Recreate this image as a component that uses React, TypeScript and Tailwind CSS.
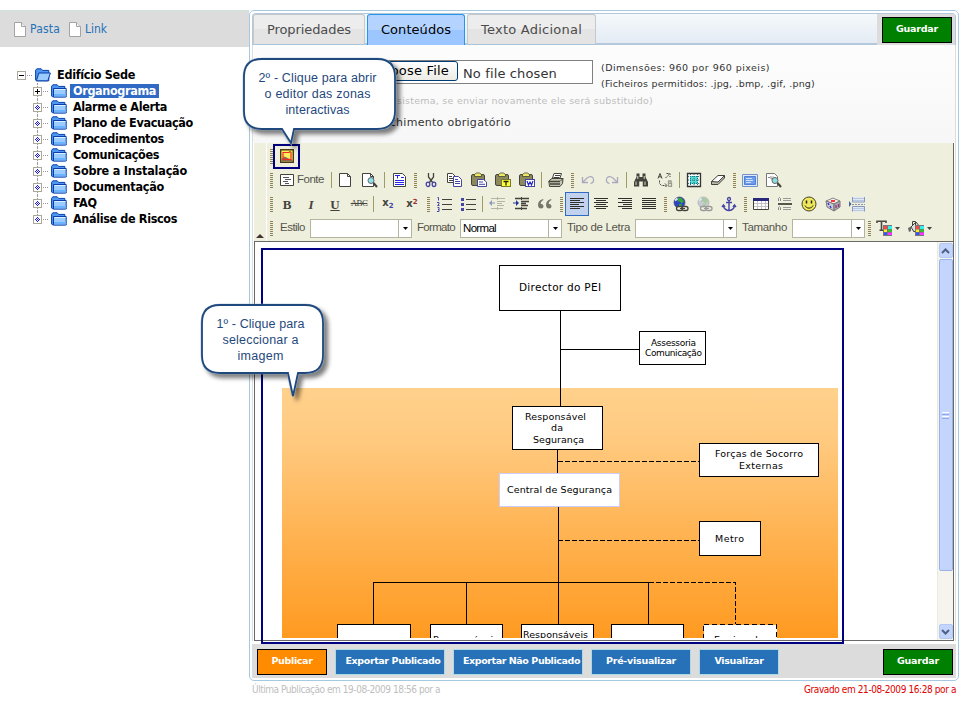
import { useLayoutEffect, useRef, type ReactNode } from "react";

/** One line of text whose tracking is computed so that it spans `w` pixels. */
function Fit({ w, className = "", children }: { w: number; className?: string; children: string }) {
  const ref = useRef<HTMLSpanElement>(null);
  useLayoutEffect(() => {
    const el = ref.current;
    if (!el) return;
    el.style.letterSpacing = "0px";
    const natural = el.getBoundingClientRect().width;
    el.style.letterSpacing = `${(w - natural) / children.length}px`;
  }, [w, children]);
  return (
    <span ref={ref} className={`inline-block shrink-0 self-center whitespace-nowrap ${className}`}>
      {children}
    </span>
  );
}

const verdana = "font-['DejaVu_Sans',sans-serif]";
const tahoma = "font-['DejaVu_Sans_Condensed','DejaVu_Sans',sans-serif]";

function Icon({ children, w = 16, h = 16 }: { children: ReactNode; w?: number; h?: number }) {
  return (
    <svg width={w} height={h} viewBox={`0 0 ${w} ${h}`} fill="none" className="block shrink-0">
      {children}
    </svg>
  );
}

/* ---------- Tree ---------- */

function SheetIcon() {
  return (
    <Icon w={12} h={15}>
      <path d="M.5.5h7l4 4v10H.5z" fill="#fff" stroke="#a3a3a3" />
      <path d="M7.5.5v4h4" fill="#eee" stroke="#a3a3a3" />
    </Icon>
  );
}

function FolderIcon({ open = false }: { open?: boolean }) {
  return (
    <Icon w={16} h={14}>
      <path d="M.6 12V2.2L1.8.8H6.2L7.5 2.4H13.8V12.8H1.4z" fill="#4e97f2" stroke="#0b3fa8" />
      {open ? (
        <path d="M3.8 5H15.4L12.8 12.8H1.4z" fill="#9accff" stroke="#0b3fa8" />
      ) : (
        <>
          <path d="M2.5 4.5H15.2V13H2.5z" fill="#9accff" stroke="#0b3fa8" />
          <path d="M3.5 5.500H14.500" stroke="#d9edff" />
          <path d="M3 10h12v2.500H3z" fill="#6db0fb" />
        </>
      )}
    </Icon>
  );
}

function Toggle({ kind }: { kind: "minus" | "plus" | "dot" }) {
  return (
    <span className="grid h-[9px] w-[9px] shrink-0 place-items-center border border-[#aca899] bg-white">
      <svg width="7" height="7" viewBox="0 0 7 7" shapeRendering="crispEdges">
        {kind === "dot" ? (
          <path d="M3 1h1v1H3zM2 2h1v1H2zM4 2h1v1H4zM1 3h1v1H1zM3 3h1v1H3zM5 3h1v1H5zM2 4h1v1H2zM4 4h1v1H4zM3 5h1v1H3z" fill="#1b1be0" />
        ) : (
          <path d={kind === "plus" ? "M1 3h5v1H1zM3 1h1v5H3z" : "M1 3h5v1H1z"} fill="#000" />
        )}
      </svg>
    </span>
  );
}

const nodes: { label: string; w: number; kind: "plus" | "dot"; selected?: boolean }[] = [
  { label: "Organograma", w: 83, kind: "plus", selected: true },
  { label: "Alarme e Alerta", w: 94, kind: "dot" },
  { label: "Plano de Evacuação", w: 120, kind: "dot" },
  { label: "Procedimentos", w: 91, kind: "dot" },
  { label: "Comunicações", w: 86, kind: "dot" },
  { label: "Sobre a Instalação", w: 114, kind: "dot" },
  { label: "Documentação", w: 91, kind: "dot" },
  { label: "FAQ", w: 24, kind: "dot" },
  { label: "Análise de Riscos", w: 104, kind: "dot" },
];

function Sidebar() {
  return (
    <aside className="w-[249px] shrink-0 pt-[10px]">
      <div className="flex h-[37px] items-center gap-[4px] border-t border-[#cfe3da] bg-[#dcdcdc] pl-[14px] text-[12px] text-[#2671b8]">
        <SheetIcon />
        <Fit w={30} className={tahoma}>Pasta</Fit>
        <span className="w-[1px]" />
        <SheetIcon />
        <Fit w={22} className={tahoma}>Link</Fit>
      </div>
      <div className={`mt-[20px] text-[12.5px] leading-[16px] font-bold text-black ${tahoma}`}>
        <div className="flex h-4 items-center pl-[17px]">
          <Toggle kind="minus" />
          <span className="mr-[3px] ml-px w-[5px] border-t border-dotted border-[#999]" />
          <FolderIcon open />
          <Fit w={78} className="ml-[6px]">Edifício Sede</Fit>
        </div>
        {nodes.map((n, i) => (
          <div key={n.label} className="flex h-4 items-center pl-[33px]">
            <span className="flex h-4 w-[9px] shrink-0 flex-col items-center">
              <span className="h-[4px] border-l border-dotted border-[#999]" />
              <Toggle kind={n.kind} />
              <span className={`h-[3px] border-l border-dotted ${i === nodes.length - 1 ? "border-transparent" : "border-[#999]"}`} />
            </span>
            <span className="mr-[3px] ml-px w-[5px] border-t border-dotted border-[#999]" />
            <FolderIcon />
            <span className={`ml-[3px] h-[14px] px-[3px] leading-[14px] ${n.selected ? "bg-[#316ac5] text-white" : ""}`}>
              <Fit w={n.w}>{n.label}</Fit>
            </span>
          </div>
        ))}
      </div>
    </aside>
  );
}

/* ---------- Toolbar ---------- */

function Grip() {
  return (
    <span className="flex w-2 shrink-0 justify-center">
      <svg width="3" height="15" shapeRendering="crispEdges">
        {[0, 2, 4, 6, 8, 10, 12, 14].map((y) => (
          <path key={y} d={`M0 ${y}h3v1H0z`} fill="#8f8255" />
        ))}
      </svg>
    </span>
  );
}
function Sep() {
  return (
    <span className="flex w-[5px] shrink-0 justify-center">
      <span className="h-4 w-px bg-[#a09b62]" />
    </span>
  );
}
function Btn({ children, on = false }: { children: ReactNode; on?: boolean }) {
  return (
    <span className={`flex h-6 w-6 shrink-0 items-center justify-center ${on ? "border border-[#316ac5] bg-[#c1d2ee]" : ""}`}>
      {children}
    </span>
  );
}
function Row({ children }: { children: ReactNode }) {
  return <div className="flex h-6 items-center">{children}</div>;
}

const D = "#43433c";
const B = "#4545a5";

const PageI = () => (
  <Icon><path d="M1.5 1.5h8l3 3v10h-11z" fill="#fff" stroke={D} /><path d="M9.5 1.5v3h3" stroke={D} /></Icon>
);
const PreviewI = () => (
  <Icon>
    <path d="M.5 1.5h8l3 3v10h-11z" fill="#fff" stroke={D} />
    <path d="M8.5 1.5v3h3" stroke={D} />
    <circle cx="9" cy="8.5" r="3" fill="#8fe3e3" stroke="#667" />
    <path d="M11.500 11l3.500 4" stroke={D} strokeWidth="2" />
  </Icon>
);
const TemplateI = () => (
  <Icon>
    <path d="M2.5 1.5h9l3 3v10h-12z" fill="#fff" stroke={D} />
    <path d="M4 3.5h5M6.500 3.500v3M10 5.500h3M4 8.500h9M4 10.500h9M4 12.500h9" stroke="#2424e8" />
  </Icon>
);
const CutI = () => (
  <Icon>
    <path d="M5.500 1v4l4.500 6M10.500 1v4L6 11" stroke={D} strokeWidth="1.300" />
    <ellipse cx="5" cy="12.300" rx="1.800" ry="2.200" stroke={B} strokeWidth="1.300" /><ellipse cx="11" cy="12.300" rx="1.800" ry="2.200" stroke={B} strokeWidth="1.300" />
  </Icon>
);
const CopyI = () => (
  <Icon>
    <path d="M.5 1.500h5l3 3v6h-8z" fill="#fff" stroke={D} /><path d="M2 4.500h3M2 6.500h4M2 8.500h4" stroke={D} />
    <path d="M6.500 4.500h5l3 3v7h-8z" fill="#fff" stroke={B} /><path d="M8 7.500h3M8 9.500h5M8 11.500h5" stroke={B} />
  </Icon>
);
function PasteI({ tag }: { tag?: "T" | "W" }) {
  return (
    <Icon>
      <rect x=".5" y="2.500" width="13" height="11" rx="1.500" fill="#8c8a5b" stroke={D} />
      <path d="M3.500 4.500V2.500L5.500 1h3l2 1.500v2z" fill="#efea63" stroke={D} strokeWidth=".8" />
      {tag ? (
        <>
          <rect x="6.500" y="7.500" width="9" height="7" fill={tag === "T" ? "#ffff38" : "#fff"} stroke={tag === "T" ? "#77762d" : B} />
          {tag === "T" ? <path d="M8.500 9.500h5M11 9.500v4" stroke="#222" strokeWidth="1.300" /> : <path d="M8 9l1.500 4L11 10l1.500 3L14 9" stroke="#2828c8" strokeWidth="1.200" />}
        </>
      ) : (
        <><path d="M6.500 7.500h6l3 2.500v4.500h-9z" fill="#fff" stroke={B} /><path d="M8 10h4M8 12.300h6" stroke={B} /></>
      )}
    </Icon>
  );
}
const PrintI = () => (
  <Icon>
    <path d="M4.500 6l1.500-4.500h7.500L12 6z" fill="#fff" stroke={D} /><path d="M7 3.500h5M6 5.500h5" stroke={D} />
    <path d="M.8 9l3-2.500H15l-.500 5L12 14.500H1.500z" fill="#c8c6b4" stroke={D} /><path d="M1 9.500h11M2 12h10" stroke={D} strokeWidth="1.400" /><path d="M12.500 9L15 6.500" stroke={D} />
  </Icon>
);
const UndoI = ({ flip = false }: { flip?: boolean }) => (
  <Icon><g transform={flip ? "matrix(-1 0 0 1 16 0)" : undefined}><path d="M2.500 5v5.500H8" stroke="#a9a9bd" strokeWidth="1.300" /><path d="M3 10L7 6c3-2.500 6-1.500 6.500 1s-1 4-3 4.500" stroke="#a9a9bd" strokeWidth="1.200" /></g></Icon>
);
const FindI = () => (
  <Icon><path d="M3.500 1.500h3v3.500h3V1.500h3V5l2.500 5v4.500H9.800V9.500H6.200v5H1V10l2.500-5z" fill={D} /><path d="M3 9.500v3.500M12 9.500v3.500M4.800 4v3M11.200 4v3" stroke="#d6d5c4" /></Icon>
);
const ReplaceI = () => (
  <Icon>
    <path d="M1 6.500L3 1.500l2 5M1.700 4.800h2.600" stroke={D} /><path d="M11.500 8.500v6M11.500 9h2.500v2.300h-2.500h3v3h-3" stroke="#9a9a8d" strokeWidth="1.300" />
    <path d="M8.500 6L12 2.500M9.500 1.500h3.500v3.500M2.500 8.500v3l2.500 2.500M5.500 13.500h4M8 11.500l2 2-2 2" stroke={D} strokeDasharray="2 1" />
  </Icon>
);
const SelectAllI = () => (
  <Icon><path d="M1.500 1.500h13v13h-13z" fill="#fff" stroke="#333" strokeWidth="1.300" /><path d="M4 4h8v8H4z" fill="#54dada" /><path d="M4.500 2v12M11.500 2v12M2 4.500h12M2 11.500h12M8 2v12M2 8h12" stroke="#277" strokeDasharray="1 1" /></Icon>
);
const EraserI = () => (
  <Icon><path d="M1.500 9.500L8 3.500h6.500l-6 7H1.500z" fill="#fff" stroke={D} /><path d="M1.500 9.500V12.500H8l6.500-6.500V3.500L8 10z" fill="#bbb9ae" stroke={D} /></Icon>
);
const FitWindowI = () => (
  <Icon><path d="M.5 2.500h15v12H.5z" fill="#dfe9fb" stroke="#7494c8" /><path d="M2.500 4.500h11v8h-11z" fill="#6f9ce6" stroke="#4f7fd6" /><path d="M4 6.500h6M4 8.500h7M4 10.500h5" stroke="#cfe0ff" /></Icon>
);
const SpellI = () => (
  <Icon><path d="M.5 1.500h8l3 3v10H.5z" fill="#fff" stroke="#777" /><path d="M2 5.500h2M5 4v3h2V4.500" stroke="#888" /><circle cx="9" cy="8.500" r="3" fill="#8fdede" stroke="#666" /><path d="M11.500 11l3.500 4" stroke={D} strokeWidth="2" /></Icon>
);
function Lines({ rows, x = 1 }: { rows: [number, number][]; x?: number }) {
  return (
    <Icon>
      <g shapeRendering="crispEdges">
        {rows.map(([dx, w], i) => <path key={i} d={`M${x + dx} ${2 + i * 2}h${w}v1h-${w}z`} fill="#2f2f2b" />)}
      </g>
    </Icon>
  );
}
const ListI = ({ ordered = false }: { ordered?: boolean }) => (
  <Icon>
    <path d="M6 3.500h10M6 8.500h10M6 13.500h10" stroke={D} />
    {ordered ? (
      <path d="M1.500 1.500h1v3M1 6.500h2v1.500L1.500 9.500h2M1.500 11.500h1.500v4h-2M2 13.500h1" stroke={B} />
    ) : (
      <path d="M1 2h3v3H1zM1 7h3v3H1zM1 12h3v3H1z" fill={B} />
    )}
  </Icon>
);
const IndentI = ({ faded = false }: { faded?: boolean }) => (
  <Icon>
    <path d="M2 2.500h14M8 5.500h8M8 7.500h5M8 9.500h7M2 12.500h12" stroke={faded ? "#b5b4a5" : D} strokeWidth={faded ? 1 : 1.400} />
    <path d="M8.500 1v14" stroke={faded ? "#b5b4a5" : D} strokeDasharray="1 1" />
    {faded ? <path d="M3 4L0 7l3 3zM3 6.500h3v1H3z" fill="#8f9ab8" /> : <path d="M3 4l3 3-3 3zM0 6.500h3v1H0z" fill="#22389a" />}
  </Icon>
);
const QuoteI = () => (
  <Icon><path d="M6 3C2.500 4 1 6 1 9c0 4.500 5.500 4.500 5.500 1.300C6.500 8.500 5.300 7.600 3.700 8 3.700 6 4.500 5 6.500 4zM14 3c-3.500 1-5 3-5 6 0 4.500 5.500 4.500 5.500 1.300 0-1.800-1.200-2.700-2.800-2.300 0-2 .8-3 2.800-4z" fill="#77766c" /></Icon>
);
const GlobeI = ({ faded = false }: { faded?: boolean }) => (
  <Icon>
    <circle cx="6.500" cy="6.500" r="5.500" fill={faded ? "#c7cad0" : "#2b45c5"} stroke={faded ? "#aaa" : "#445"} strokeWidth=".7" />
    <path d="M5 1.500l4 1 2 3-2.500 2-2-2-2 0zM6 8l3 0-1 3-2-1z" fill={faded ? "#a5cc9c" : "#38a53a"} /><path d="M2 4.500l2.500-2" stroke="#dce7ff" strokeWidth="2" />
    <rect x="3.500" y="10.500" width="6" height="4" rx="2" fill="#efefde" stroke={faded ? "#999" : D} strokeWidth="1.300" /><rect x="9" y="10.500" width="6" height="4" rx="2" fill="#efefde" stroke={faded ? "#999" : D} strokeWidth="1.300" /><path d="M7 12.500h5" stroke={faded ? "#999" : D} />
  </Icon>
);
const AnchorI = () => (
  <Icon><circle cx="8" cy="3" r="1.500" stroke={B} strokeWidth="1.300" /><path d="M8 4.500v10M5 6.500h6M2.500 9.500c0 3 3 5 5.500 5s5.500-2 5.500-5M1 11l1.500-2L4 11M12 11l1.500-2L15 11" stroke={B} strokeWidth="1.400" /></Icon>
);
const TableI = () => (
  <Icon><path d="M.5 2.500h15v11H.5z" fill="#fff" stroke={D} /><path d="M0 2h16v3H0z" fill="#27277c" /><path d="M4.500 5v8M8.500 5v8M12.500 5v8M1 7.500h14M1 10.500h14" stroke="#c4c4c4" /></Icon>
);
const RuleI = () => (
  <Icon><path d="M1 8h14" stroke={D} strokeWidth="1.800" /><path d="M1.500 5V2.500l1-1 1 1V5M1.500 14v-2.500l1-1 1 1V14" stroke="#888" /><path d="M6 2.500h8M6 4.500h8M6 11.500h8M6 13.500h8" stroke="#999" /></Icon>
);
const SmileI = () => (
  <Icon><circle cx="8" cy="8" r="7" fill="#eee85a" stroke="#44432f" /><path d="M5.500 4.500v3M10.500 4.500v3" stroke="#222" strokeWidth="1.500" /><path d="M4 9.500c1.500 3.500 6.500 3.500 8 0" stroke="#222" /></Icon>
);
const DiceI = () => (
  <Icon><path d="M1 5l7-3 7 3-6 3z" fill="#eee" stroke="#888" /><path d="M1 5l8 3v7l-7-4z" fill="#ccc" stroke="#777" /><path d="M9 8l6-3v6l-6 4z" fill="#aaa" stroke="#777" /><path d="M6 4h4v2H6z" fill="#f33" /><path d="M3 7l1 2M5 10l1 2" stroke="#33d" strokeWidth="1.500" /><path d="M11 9v3M13.500 8v3" stroke="#938" strokeWidth="1.300" /></Icon>
);
const BreakI = () => (
  <Icon><path d="M3.500 1v5h12V1M3.500 15.500v-5h12v5" fill="#dfe8f5" stroke="#8699bd" /><path d="M4 2.500h11M4 4.500h11M4 12.500h11M4 14.500h11" stroke="#b8c8e2" /><path d="M3 8.500h13" stroke="#8a95a8" strokeDasharray="2 1" /><path d="M0 5l2.500 3L0 11z" fill="#46649c" /></Icon>
);
const ImageMapI = () => (
  <Icon w={14} h={14}><path d="M.7.7h12.600v12.600H.7z" fill="#ffef5a" stroke="#4c3a1c" strokeWidth="1.400" /><path d="M1.500 10l3-2.500 3 1.500 5 2v1.500h-11z" fill="#8b6b4f" /><path d="M3 3.500h8v7H3z" stroke="#f02a2a" strokeWidth="1.200" /><circle cx="10" cy="2.800" r="1.200" fill="#b0801c" /></Icon>
);
function ColorI({ kind }: { kind: "text" | "fill" }) {
  return (
    <span className="flex items-center gap-[3px]">
      <Icon>
        {kind === "text" ? (
          <path d="M1 3V1.200h9V3M5.500 1v9M3.500 10.300h4" stroke="#4b4b44" strokeWidth="1.600" />
        ) : (
          <><path d="M3 7l5-5 4 5-6 5z" fill="#ddd" stroke={D} /><path d="M4.500 5.500V1.500h3V5" stroke={D} /><path d="M3 6.500L0 8l1 4 2-1z" fill="#666" /></>
        )}
        <path d="M7 5h9v11H7z" fill="#777" /><path d="M8 6h3v3H8z" fill="#f44" /><path d="M12 6h4v3h-4z" fill="#3ee" /><path d="M8 9.500h3v2.500H8z" fill="#fe2" /><path d="M12 9.500h4V12h-4z" fill="#3b3" /><path d="M8 12.500h3V15H8z" fill="#35f" /><path d="M12 12.500h4V15h-4z" fill="#f3f" />
      </Icon>
      <svg width="5" height="3"><path d="M0 0h5L2.500 3z" fill={D} /></svg>
    </span>
  );
}
const G = ({ children, className }: { children: ReactNode; className: string }) => (
  <span className={`font-['Liberation_Serif',serif] text-[13px] leading-none font-bold text-[#43433c] ${className}`}>{children}</span>
);

function Combo({ label, lw, className, value = "" }: { label: string; lw: number; className: string; value?: string }) {
  return (
    <>
      <Fit w={lw} className="ml-[5px] text-[11.5px] text-[#55554c]">{label}</Fit>
      <span className={`ml-[5px] flex h-[19px] shrink-0 border border-[#b5b49e] bg-white text-[11.5px] leading-[17px] text-black ${className}`}>
        <span className="flex-1 pl-[2px]">{value ? <Fit w={33}>{value}</Fit> : null}</span>
        <span className="grid w-[13px] place-items-center border-l border-[#b5b49e]">
          <svg width="5" height="3"><path d="M0 0h5L2.500 3z" fill="#000" /></svg>
        </span>
      </span>
    </>
  );
}

function Toolbar() {
  return (
    <div className="flex h-[98px] border-r border-[#696969] bg-[#efefde] font-['Liberation_Sans',sans-serif]">
      <div className="flex w-[13px] items-end justify-center border-r border-white pb-[3px]">
        <svg width="8" height="4"><path d="M0 4h8L4 0z" fill="#433" /></svg>
      </div>
      <div className="pt-px">
        <Row>
          <Grip />
          <span className="-ml-[2px] flex h-[25px] w-[27px] shrink-0 items-center justify-center border-2 border-[#000080]"><ImageMapI /></span>
        </Row>
        <Row>
          <Grip />
          <span className="flex w-[54px] items-center gap-[3px] pl-[5px] text-[11.5px] text-[#55554c]">
            <Icon w={14} h={12}><path d="M.5.500h13v11H.5z" fill="#fff" stroke={D} /><path d="M3 3.500h6M5 5.500h6M3 7.500h5M5 9.500h4" stroke="#555" /></Icon>
            <Fit w={27}>Fonte</Fit>
          </span>
          <Sep /><Btn><PageI /></Btn><Btn><PreviewI /></Btn>
          <Sep /><Btn><TemplateI /></Btn>
          <Grip /><Btn><CutI /></Btn><Btn><CopyI /></Btn><Btn><PasteI /></Btn><Btn><PasteI tag="T" /></Btn><Btn><PasteI tag="W" /></Btn>
          <Sep /><Btn><PrintI /></Btn>
          <Grip /><Btn><UndoI /></Btn><Btn><UndoI flip /></Btn>
          <Sep /><Btn><FindI /></Btn><Btn><ReplaceI /></Btn>
          <Sep /><Btn><SelectAllI /></Btn><Btn><EraserI /></Btn>
          <Grip /><Btn><FitWindowI /></Btn><Btn><SpellI /></Btn>
        </Row>
        <Row>
          <Grip /><Btn><G className="">B</G></Btn><Btn><G className="italic">I</G></Btn><Btn><G className="underline">U</G></Btn>
          <Btn><span className="font-['Liberation_Serif',serif] text-[9px] tracking-[-0.6px] text-[#43433c] line-through">ABC</span></Btn>
          <Sep />
          <Btn><span className="-mt-[2px] font-['DejaVu_Sans',sans-serif] text-[10px] leading-none font-bold text-[#43433c]">x<sub className="text-[7px] text-[#4545a5]">2</sub></span></Btn>
          <Btn><span className="font-['DejaVu_Sans',sans-serif] text-[10px] leading-none font-bold text-[#43433c]">x<sup className="text-[7px] text-[#a52a2a]">2</sup></span></Btn>
          <Grip /><Btn><ListI ordered /></Btn><Btn><ListI /></Btn>
          <Sep /><Btn><IndentI faded /></Btn><Btn><IndentI /></Btn><Btn><QuoteI /></Btn>
          <Grip />
          <Btn on><Lines rows={[[0, 14], [0, 10], [0, 14], [0, 9], [0, 14], [0, 10]]} /></Btn>
          <Btn><Lines rows={[[0, 14], [2, 10], [0, 14], [2, 10], [0, 14], [2, 10]]} /></Btn>
          <Btn><Lines rows={[[0, 14], [4, 10], [0, 14], [5, 9], [0, 14], [4, 10]]} /></Btn>
          <Btn><Lines rows={[[0, 14], [0, 14], [0, 14], [0, 14], [0, 14], [0, 14]]} /></Btn>
          <Grip /><Btn><GlobeI /></Btn><Btn><GlobeI faded /></Btn><Btn><AnchorI /></Btn>
          <Grip /><Btn><TableI /></Btn><Btn><RuleI /></Btn><Btn><SmileI /></Btn><Btn><DiceI /></Btn><Btn><BreakI /></Btn>
        </Row>
        <Row>
          <Grip />
          <Combo label="Estilo" lw={25} className="w-[102px]" />
          <Combo label="Formato" lw={38} className="w-[102px]" value="Normal" />
          <Combo label="Tipo de Letra" lw={63} className="w-[102px]" />
          <Combo label="Tamanho" lw={45} className="w-[73px]" />
          <Grip />
          <span className="flex gap-2 pl-[3px]"><ColorI kind="text" /><ColorI kind="fill" /></span>
        </Row>
      </div>
    </div>
  );
}

/* ---------- Organisation chart ---------- */

const boxes: [number, number, number, number][] = [
  [499, 265, 121, 45],
  [639, 331, 66, 33],
  [512, 406, 90, 43],
  [699, 443, 119, 33],
  [699, 521, 61, 34],
  [337, 624, 73, 30],
  [430, 624, 72, 30],
  [521, 624, 72, 30],
  [611, 624, 72, 30],
];
const labels: [string, number, number, number, number][] = [
  ["Director do PEI", 519, 291, 82, 10.5],
  ["Assessoria", 651, 346, 45, 9],
  ["Comunicação", 645, 356, 57, 9],
  ["Responsável", 525, 420, 61, 9.5],
  ["da", 551, 431, 12, 9.5],
  ["Segurança", 533, 443, 51, 9.5],
  ["Forças de Socorro", 715, 457, 88, 9.5],
  ["Externas", 739, 469, 44, 9.5],
  ["Central de Segurança", 507, 493, 105, 9.5],
  ["Metro", 715, 542, 29, 9.5],
  ["Responsáveis", 433, 643, 65, 9.5],
  ["Responsáveis", 523, 638, 65, 9.5],
  ["Equipa de", 714, 643, 50, 9.5],
];

function Chart() {
  return (
    <svg width="579" height="388" viewBox="261 250 579 388" className="block">
      <defs>
        <linearGradient id="amber" x1="0" y1="0" x2="0" y2="1">
          <stop offset="0" stopColor="#ffd18c" />
          <stop offset=".2" stopColor="#ffca80" />
          <stop offset="1" stopColor="#ff9a20" />
        </linearGradient>
      </defs>
      <rect x="282" y="388" width="556" height="250" fill="url(#amber)" />
      <g stroke="#000" fill="none" shapeRendering="crispEdges">
        <path d="M560.500 310v96M560.500 349.500H639M557.500 449v25M558.500 507v117M373.500 624v-41.500H649M466.500 582v42M648.500 582v42" />
        <path d="M558 461.500H699M558 540.500H699M649 582.500H735.500V624" strokeDasharray="5 2" />
        {boxes.map(([x, y, w, h]) => <rect key={`${x}-${y}`} x={x + 0.5} y={y + 0.5} width={w} height={h} fill="#fff" />)}
        <rect x="499.500" y="473.500" width="120" height="33" fill="#fff" stroke="#ccccff" />
        <rect x="703.500" y="624.500" width="73" height="30" fill="#fff" strokeDasharray="5 3" strokeWidth="1.500" />
      </g>
      <g fill="#000" className="font-['DejaVu_Sans',sans-serif]">
        {labels.map(([t, x, y, w, s]) => (
          <text key={`${t}${x}`} x={x} y={y} fontSize={s} textLength={w} lengthAdjust="spacing">{t}</text>
        ))}
      </g>
    </svg>
  );
}

function ScrollArrow({ down = false }: { down?: boolean }) {
  return (
    <span className="grid h-[15px] w-[14px] place-items-center rounded-[2px] border border-[#b3c8f5] bg-[#c3d5fd]">
      <svg width="9" height="6" fill="none"><path d={down ? "M1 1l3.500 3.500L8 1" : "M1 5l3.500-3.500L8 5"} stroke="#4d6185" strokeWidth="2" /></svg>
    </span>
  );
}

function Editor() {
  return (
    <div className="relative flex h-[400px] justify-between border border-[#696969] bg-white">
      <div className="pt-[8px] pl-[6px]"><Chart /></div>
      <div className="flex w-4 flex-col items-center border-l border-[#eceadb] bg-[#f5f4ef] py-px">
        <ScrollArrow />
        <span className="mt-px flex h-[312px] w-[14px] flex-col items-center justify-center gap-px rounded-[2px] border border-[#98b3ec] bg-[#c4d5fd]">
          <span className="h-px w-[7px] bg-white" /><span className="h-px w-[7px] bg-[#8faaf0]" /><span className="h-px w-[7px] bg-white" /><span className="h-px w-[7px] bg-[#8faaf0]" />
        </span>
        <span className="mt-auto"><ScrollArrow down /></span>
      </div>
      <div className="absolute top-[6px] left-[6px] h-[396px] w-[583px] border-2 border-[#000080]" />
    </div>
  );
}

/* ---------- Panel ---------- */

function Tab({ children, w, className }: { children: string; w: number; className: string }) {
  return (
    <span className={`flex h-[31px] items-center justify-center rounded-t-[3px] border text-[13px] ${className}`}>
      <Fit w={w}>{children}</Fit>
    </span>
  );
}
function Button({ children, w, className }: { children: string; w: number; className: string }) {
  return (
    <span className={`flex h-[26px] shrink-0 items-center justify-center border text-[9.5px] font-bold text-white ${className}`}>
      <Fit w={w}>{children}</Fit>
    </span>
  );
}
const plainTab = "border-[#c5c9cc] border-b-[#a9c3d9] bg-linear-to-b from-[#ededed] from-50% to-[#e4e4e4] to-50% text-[#4c4c4c]";
const blue = "border-[#add8e6] bg-[#2671b8]";

function Callout({ lines, w, h, tail, className }: { lines: [string, number][]; w: number; h: number; tail: [number, number, number, number]; className: string }) {
  const [a, tip, b, depth] = tail;
  const r = 18;
  const d = `M${r + 1} 1H${w - r - 1}Q${w - 1} 1 ${w - 1} ${r + 1}V${h - r - 1}Q${w - 1} ${h - 1} ${w - r - 1} ${h - 1}H${b}L${tip} ${h + depth}L${a} ${h - 1}H${r + 1}Q1 ${h - 1} 1 ${h - r - 1}V${r + 1}Q1 1 ${r + 1} 1z`;
  return (
    <div className={`absolute ${className}`}>
      <svg width={w + 12} height={h + depth + 12} className="block overflow-visible drop-shadow-[4px_4px_2px_rgba(0,0,0,0.5)]">
        <path d={d} fill="#fff" stroke="#9db4d2" strokeWidth="2.600" />
        <path d={d} fill="#fff" stroke="#1f497d" strokeWidth="1.800" />
      </svg>
      <svg width={w} height={h} className="absolute top-0 left-0 font-['Liberation_Sans',sans-serif]">
        {lines.map(([t, tw], i) => (
          <text key={t} x={(w - tw) / 2 - 2} y={24 + i * 16} fontSize="12.5" fill="#1f497d" textLength={tw} lengthAdjust="spacing">{t}</text>
        ))}
      </svg>
    </div>
  );
}

export default function App() {
  return (
    <div className={`relative flex h-[705px] w-[964px] overflow-hidden bg-white ${verdana}`}>
      <Sidebar />
      <main className="w-[710px] pt-[10px]">
        <section className="h-[671px] rounded-[5px] border border-[#a6c9e2] p-[2px]">
          <header className="flex h-[32px] rounded-t-[4px] border border-b-2 border-[#b3c9db] bg-linear-to-b from-[#f5f9fb] to-[#e4ebf4]">
            <Tab w={84} className={`w-[112px] ${plainTab}`}>Propriedades</Tab>
            <Tab w={70} className="ml-[2px] w-[98px] border-b-0 border-[#2694e8] bg-linear-to-b from-[#b4d4ff] from-50% to-[#9cc6ff] to-50% pb-px text-black">Conteúdos</Tab>
            <Tab w={101} className={`ml-[2px] w-[129px] ${plainTab}`}>Texto Adicional</Tab>
            <span className="ml-auto flex h-[31px] w-[78px] items-center justify-center bg-[#dcdcdc] pl-[2px]">
              <Button w={42} className="w-[70px] border-black bg-[#008000]">Guardar</Button>
            </span>
          </header>
          <div className="border-x border-[#dddddd]">
            <div className="flex h-[98px] flex-col items-start bg-linear-to-b from-[#fdfdfd] to-[#f7f7f7] pt-[15px] text-[#333]">
              <div className="flex h-[32px] text-[9.5px] leading-[16px]">
                <span className="ml-[77px] flex h-[24px] w-[263px] items-center border border-[#808080] bg-white text-[13px] text-black">
                  <span className="-mt-[2px] flex h-[20px] w-[127px] items-center justify-end rounded-[3px] border border-[#003c74] bg-linear-to-b from-white to-[#ecebe5] pr-[8px]">
                    <Fit w={76}>Choose File</Fit>
                  </span>
                  <Fit w={94} className="mt-[3px] ml-[5px] text-[#333]">No file chosen</Fit>
                </span>
                <span className="ml-[8px] flex flex-col items-start">
                  <Fit w={169} className="self-start">(Dimensões: 960 por 960 pixeis)</Fit>
                  <Fit w={214} className="self-start">(Ficheiros permitidos: .jpg, .bmp, .gif, .png)</Fit>
                </span>
              </div>
              <Fit w={256} className="mt-px ml-[144px] h-[16px] self-start text-[9.5px] leading-[16px] text-[#bdbdbd]">sistema, se enviar novamente ele será substituido)</Fit>
              <Fit w={154} className="mt-[6px] ml-[104px] h-[16px] self-start text-[11px] leading-[16px]">Preenchimento obrigatório</Fit>
            </div>
            <div className="px-px">
              <Toolbar />
              <Editor />
            </div>
          </div>
          <footer className="mt-[3px] flex h-[34px] items-center gap-[8px] bg-[#dcdcdc] pt-px pr-[3px] pl-[5px]">
            <Button w={41} className="w-[70px] border-black bg-[#ff8c00]">Publicar</Button>
            <Button w={95} className={`w-[110px] pl-[6px] ${blue}`}>Exportar Publicado</Button>
            <Button w={117} className={`w-[130px] pl-[7px] ${blue}`}>Exportar Não Publicado</Button>
            <Button w={70} className={`w-[100px] ${blue}`}>Pré-visualizar</Button>
            <Button w={49} className={`w-[80px] ${blue}`}>Visualizar</Button>
            <span className="ml-auto"><Button w={42} className="w-[70px] border-black bg-[#008000]">Guardar</Button></span>
          </footer>
        </section>
        <div className={`flex justify-between pt-px pr-[3px] pl-[3px] text-[10px] leading-[16px] ${tahoma}`}>
          <Fit w={188} className="text-[#bebebe]">Última Publicação em 19-08-2009 18:56 por a</Fit>
          <Fit w={152} className="text-[#e00000]">Gravado em 21-08-2009 16:28 por a</Fit>
        </div>
      </main>
      <Callout
        className="top-[58px] left-[243px]"
        w={153}
        h={72}
        tail={[39, 48, 51, 13]}
        lines={[["2º - Clique para abrir", 118], ["o editor das zonas", 106], ["interactivas", 64]]}
      />
      <Callout
        className="top-[304px] left-[201px]"
        w={123}
        h={70}
        tail={[87, 92, 97, 22]}
        lines={[["1º - Clique para", 88], ["seleccionar a", 76], ["imagem", 46]]}
      />
    </div>
  );
}
